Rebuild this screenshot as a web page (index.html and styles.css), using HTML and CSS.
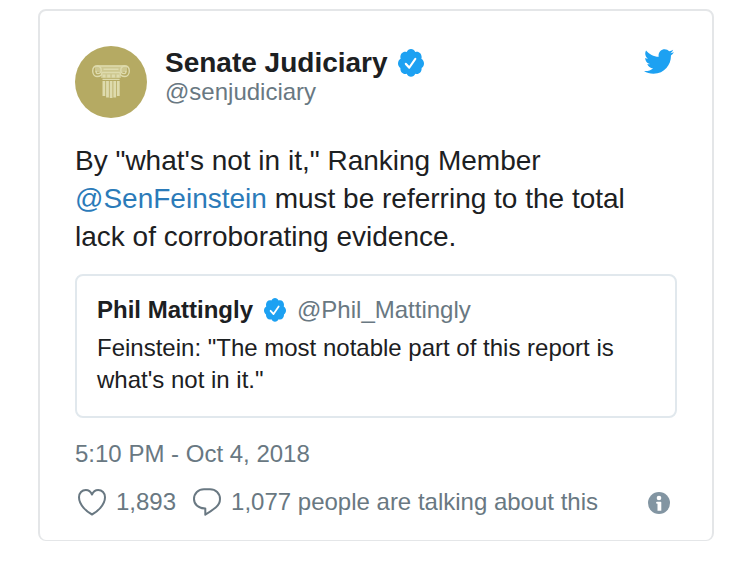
FILE: index.html
```html
<!DOCTYPE html>
<html lang="en">
<head>
<meta charset="utf-8">
<title>Senate Judiciary on Twitter</title>
<meta name="viewport" content="width=device-width, initial-scale=1">
<link rel="stylesheet" href="styles.css">
</head>
<body>
<svg class="defs" aria-hidden="true">
  <symbol id="verified" viewBox="1.5 1.5 21 22" preserveAspectRatio="none">
    <path fill="#1da1f2" d="M22.5 12.5c0-1.58-.875-2.95-2.148-3.6.154-.435.238-.905.238-1.4 0-2.21-1.71-3.998-3.818-3.998-.47 0-.92.084-1.336.25C14.818 2.415 13.51 1.5 12 1.5s-2.816.917-3.437 2.25c-.415-.165-.866-.25-1.336-.25-2.11 0-3.818 1.79-3.818 4 0 .494.083.964.237 1.4-1.272.65-2.147 2.018-2.147 3.6 0 1.495.782 2.798 1.942 3.486-.02.17-.032.34-.032.514 0 2.21 1.708 4 3.818 4 .47 0 .92-.086 1.335-.25.62 1.334 1.926 2.25 3.437 2.25 1.512 0 2.818-.916 3.437-2.25.415.163.865.248 1.336.248 2.11 0 3.818-1.79 3.818-4 0-.174-.012-.344-.033-.513 1.158-.687 1.943-1.99 1.943-3.484z"/>
    <path fill="none" stroke="#fff" stroke-width="1.700" stroke-linecap="round" stroke-linejoin="round" d="M7.800 12.800l2.800 2.800 4.900-6.600"/>
  </symbol>
</svg>
<article class="tweet">
  <header class="header">
    <svg class="avatar" viewBox="0 0 72 72" role="img" aria-label="Senate Judiciary">
      <circle cx="36" cy="36" r="36" fill="#b5aa63"/>
      <path fill="#cdc78f" d="M20 19.500H52V26H46V32H26V26H20z"/>
      <g fill="none" stroke="#dedbad" stroke-width="1.400">
        <path d="M21.500 20H50.500M27 26.500H45M28.500 23.200H43.500"/>
        <path d="M27 26.500C27 29.500 24.800 30.500 22 30.500C19.500 30.500 17.700 28 17.700 25C17.700 22 19.500 20 22 20C24.800 20 26.200 22 26.200 24.200C26.200 26.500 24.500 27.600 22.800 27.600C21.300 27.600 20.600 26 21.500 24.800"/>
        <path d="M45 26.500C45 29.500 47.200 30.500 50 30.500C52.500 30.500 54.300 28 54.300 25C54.300 22 52.500 20 50 20C47.200 20 45.800 22 45.800 24.200C45.800 26.500 47.500 27.600 49.200 27.600C50.700 27.600 51.400 26 50.500 24.800"/>
      </g>
      <g fill="#dedbad">
        <path d="M27.500 28.500h3v3h-3zM32.200 28.500h3v3h-3zM36.900 28.500h3v3h-3zM41.600 28.500h3v3h-3zM27.500 32.800h17.100v1.200H27.500zM27.500 35h2.800V50h-2.800zM31.100 35h2.800V51.500h-2.800zM34.700 35h2.800V52h-2.800zM38.300 35h2.800V51.500h-2.800zM41.900 35h2.800V50h-2.800z"/>
      </g>
    </svg>
    <div class="author">
      <div class="name-row">
        <a class="name" href="#">Senate Judiciary</a>
        <svg class="badge" role="img" aria-label="Verified"><use href="#verified"/></svg>
      </div>
      <a class="handle" href="#">@senjudiciary</a>
    </div>
    <a class="brand" href="#" aria-label="Twitter">
      <svg class="bird" viewBox="0 2 24 20"><path fill="#1da1f2" d="M23.954 4.569c-.885.389-1.83.654-2.825.775 1.014-.611 1.794-1.574 2.163-2.723-.951.555-2.005.959-3.127 1.184-.896-.959-2.173-1.559-3.591-1.559-2.717 0-4.92 2.203-4.92 4.917 0 .39.045.765.127 1.124C7.691 8.094 4.066 6.130 1.640 3.161c-.427.722-.666 1.561-.666 2.475 0 1.710.870 3.213 2.188 4.096-.807-.026-1.566-.248-2.228-.616v.061c0 2.385 1.693 4.374 3.946 4.827-.413.111-.849.171-1.296.171-.314 0-.615-.030-.916-.086.631 1.953 2.445 3.377 4.604 3.417-1.680 1.319-3.809 2.105-6.102 2.105-.390 0-.779-.023-1.170-.067 2.189 1.394 4.768 2.209 7.557 2.209 9.054 0 13.999-7.496 13.999-13.986 0-.209 0-.420-.015-.630.961-.689 1.800-1.560 2.460-2.548z"/></svg>
    </a>
  </header>
  <p class="text">By "what's not in it," Ranking Member <a class="mention" href="#">@SenFeinstein</a> must be referring to the total lack of corroborating evidence.</p>
  <blockquote class="quote">
    <div class="quote-author">
      <a class="quote-name" href="#">Phil Mattingly</a>
      <svg class="badge-small" role="img" aria-label="Verified"><use href="#verified"/></svg>
      <a class="quote-handle" href="#">@Phil_Mattingly</a>
    </div>
    <p class="quote-text">Feinstein: "The most notable part of this report is what's not in it."</p>
  </blockquote>
  <time class="date" datetime="2018-10-04T17:10">5:10 PM - Oct 4, 2018</time>
  <footer class="actions">
    <a class="action" href="#">
      <svg class="icon" viewBox="0 0 28 28" aria-hidden="true"><path d="M14 26.500C9 24 1 17 1 9.300C1 5 4 2 7.800 2C10.500 2 12.800 3.600 14 6.500C15.200 3.600 17.500 2 20.200 2C24 2 27 5 27 9.300C27 17 19 24 14 26.500Z"/></svg>
      <span>1,893</span>
    </a>
    <a class="action" href="#">
      <svg class="icon" viewBox="0 0 28 28" aria-hidden="true"><path d="M12.300 20.500C5.500 20.500 1 16.500 1 11C1 5.300 5.300 1.200 11 1.200H17C22.700 1.200 27 5.300 27 11C27 14.500 25.300 17.300 23 19.200C20 21.700 16 24.500 12.300 26.700Z"/></svg>
      <span>1,077 people are talking about this</span>
    </a>
    <a class="info" href="#" aria-label="Twitter Ads info and privacy">
      <svg class="info-icon" viewBox="0 0 22 22"><circle cx="11" cy="11" r="11" fill="#8295a2"/><circle cx="11" cy="6" r="2.300" fill="#fff"/><path fill="#fff" d="M9 9.700h3.500q.8 0 .8.800v8.200h-3.800v-7H9q-.9-.1-.9-1t.9-1z"/></svg>
    </a>
  </footer>
</article>
</body>
</html>
```
FILE: styles.css
```css
* {
  box-sizing: border-box;
}

body {
  margin: 0;
  padding: 9px 36px 24px 38px;
  background: #fff;
  color: #1c2022;
  font-family: "Liberation Sans", Arial, sans-serif;
  font-size: 24px;
  line-height: 32px;
}

a {
  color: inherit;
  text-decoration: none;
}

svg {
  display: block;
  flex: none;
}

.defs {
  position: absolute;
  width: 0;
  height: 0;
}

.tweet {
  padding: 35px;
  padding-bottom: 22px;
  border: 2px solid #e4e6e8;
  border-bottom-width: 1px;
  border-radius: 8px;
}

.header {
  display: flex;
  align-items: flex-start;
}

.avatar {
  width: 72px;
  height: 72px;
}

.author {
  flex: 1;
  margin-left: 18px;
}

.name-row {
  display: flex;
  align-items: center;
  gap: 10px;
}

.name {
  font-size: 28px;
  font-weight: bold;
  line-height: 34px;
}

.badge {
  width: 26px;
  height: 29px;
}

.handle {
  display: block;
  line-height: 24px;
  color: #697882;
}

.brand {
  margin: 3px 3px 0 0;
}

.bird {
  width: 30px;
  height: 25px;
}

.text {
  margin: 24px 0 18px;
  font-size: 28px;
  line-height: 38px;
}

.mention {
  color: #2b7bb9;
}

.quote {
  margin: 0;
  padding: 18px 20px 20px;
  border: 2px solid #e1e8ed;
  border-radius: 8px;
}

.quote-author {
  display: flex;
  align-items: center;
  gap: 11px;
  margin-bottom: 6px;
}

.quote-name {
  font-weight: bold;
}

.badge-small {
  width: 22px;
  height: 25px;
}

.quote-handle {
  color: #697882;
}

.quote-text {
  margin: 0;
}

.date {
  display: block;
  margin: 20px 0 16px;
  color: #697882;
}

.actions {
  display: flex;
  align-items: center;
  padding-left: 3px;
  color: #697882;
}

.action {
  display: flex;
  align-items: center;
  gap: 10px;
  margin-right: 17px;
}

.icon {
  width: 28px;
  height: 28px;
  fill: none;
  stroke: #697882;
  stroke-width: 2;
  stroke-linejoin: round;
}

.info {
  margin: 2px 7px 0 auto;
}

.info-icon {
  width: 22px;
  height: 22px;
}
```
